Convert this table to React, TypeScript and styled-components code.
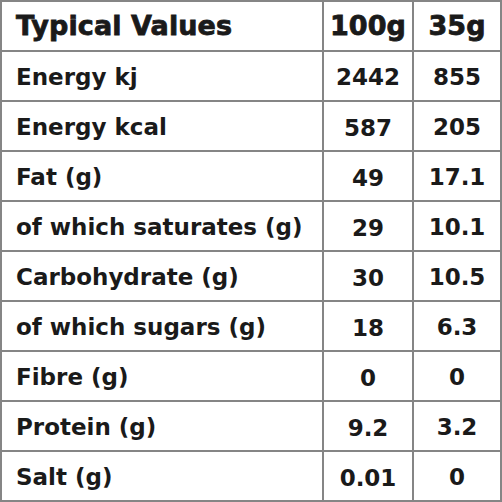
import React from "react";
import styled, { createGlobalStyle } from "styled-components";

const GlobalStyle = createGlobalStyle`
  html, body {
    margin: 0;
    padding: 0;
    background: #ffffff;
  }
`;

type Row = {
  label: string;
  per100: string;
  perServing: string;
  low?: boolean;
};

const rows: Row[] = [
  { label: "Energy kj", per100: "2442", perServing: "855" },
  { label: "Energy kcal", per100: "587", perServing: "205", low: true },
  { label: "Fat (g)", per100: "49", perServing: "17.1", low: true },
  { label: "of which saturates (g)", per100: "29", perServing: "10.1", low: true },
  { label: "Carbohydrate (g)", per100: "30", perServing: "10.5", low: true },
  { label: "of which sugars (g)", per100: "18", perServing: "6.3", low: true },
  { label: "Fibre (g)", per100: "0", perServing: "0", low: true },
  { label: "Protein (g)", per100: "9.2", perServing: "3.2", low: true },
  { label: "Salt (g)", per100: "0.01", perServing: "0", low: true },
];

const Table = styled.div`
  display: grid;
  grid-template-columns: 320px 88px 86px;
  grid-auto-rows: 48px;
  gap: 2px;
  padding: 2px;
  width: 502px;
  height: 502px;
  box-sizing: border-box;
  background: #858585;
  font-family: "DejaVu Sans", "Liberation Sans", sans-serif;
  color: #1a1a1a;
`;

const Cell = styled.div<{ $num?: boolean; $low?: boolean }>`
  background: #ffffff;
  display: flex;
  align-items: center;
  justify-content: ${({ $num }) => ($num ? "center" : "flex-start")};
  padding: ${({ $num }) => ($num ? "0" : "0 0 0 14px")};
  padding-top: ${({ $low }) => ($low ? "4px" : "1px")};
  font-size: 23px;
  font-weight: 700;
  white-space: nowrap;
  box-sizing: border-box;
`;

const HeadCell = styled(Cell)`
  font-size: 27px;
  letter-spacing: 0.1px;
  -webkit-text-stroke: 0.8px #1a1a1a;
  padding-top: 0;
  padding-bottom: 2px;
`;

export default function App() {
  return (
    <>
      <GlobalStyle />
      <Table>
        <HeadCell>Typical Values</HeadCell>
        <HeadCell $num>100g</HeadCell>
        <HeadCell $num>35g</HeadCell>
        {rows.map((r) => (
          <React.Fragment key={r.label}>
            <Cell>{r.label}</Cell>
            <Cell $num $low={r.low}>
              {r.per100}
            </Cell>
            <Cell $num>{r.perServing}</Cell>
          </React.Fragment>
        ))}
      </Table>
    </>
  );
}
